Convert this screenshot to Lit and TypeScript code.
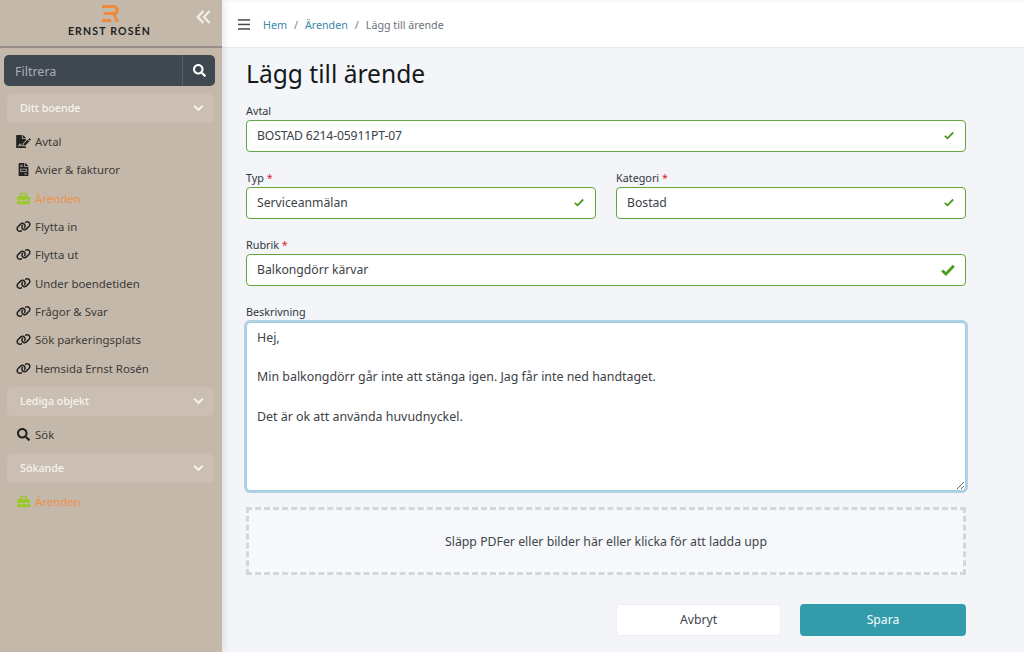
import { LitElement, html, css, svg } from "lit";
import { customElement } from "lit/decorators.js";

const ICONS: Record<string, [string, string]> = {
  search: ["0 0 512 512", "M505 442.7L405.3 343c-4.5-4.5-10.6-7-17-7H372c27.6-35.3 44-79.7 44-128C416 93.1 322.9 0 208 0S0 93.1 0 208s93.1 208 208 208c48.3 0 92.7-16.4 128-44v16.3c0 6.4 2.5 12.5 7 17l99.7 99.7c9.4 9.4 24.6 9.4 33.9 0l28.3-28.3c9.4-9.4 9.4-24.6.1-34zM208 336c-70.7 0-128-57.2-128-128 0-70.7 57.2-128 128-128 70.7 0 128 57.2 128 128 0 70.7-57.2 128-128 128z"],
  link: ["0 0 640 512", "M579.8 267.7c56.5-56.5 56.5-148 0-204.5c-50-50-128.8-56.5-186.3-15.4l-1.6 1.1c-14.4 10.3-17.7 30.3-7.4 44.6s30.3 17.7 44.6 7.4l1.6-1.1c32.1-22.9 76-19.3 103.8 8.6c31.5 31.5 31.5 82.5 0 114L422.3 334.8c-31.5 31.5-82.5 31.5-114 0c-27.9-27.9-31.5-71.8-8.6-103.8l1.1-1.6c10.3-14.4 6.9-34.4-7.4-44.6s-34.4-6.9-44.6 7.4l-1.1 1.6C206.5 251.2 213 330 263 380c56.5 56.5 148 56.5 204.5 0L579.8 267.7zM60.2 244.3c-56.5 56.5-56.5 148 0 204.5c50 50 128.8 56.5 186.3 15.4l1.6-1.1c14.4-10.3 17.7-30.3 7.4-44.6s-30.3-17.7-44.6-7.4l-1.6 1.1c-32.1 22.9-76 19.3-103.8-8.6C74 372 74 321 105.5 289.5L217.7 177.2c31.5-31.5 82.5-31.5 114 0c27.9 27.9 31.5 71.8 8.6 103.9l-1.1 1.6c-10.3 14.4-6.9 34.4 7.4 44.6s34.4 6.9 44.6-7.4l1.1-1.6C433.5 260.8 427 182 377 132c-56.5-56.5-148-56.5-204.5 0L60.2 244.3z"],
  toolbox: ["0 0 512 512", "M502.63 214.63l-45.25-45.25c-6-6-14.14-9.37-22.63-9.37H384V80c0-26.51-21.49-48-48-48H176c-26.51 0-48 21.49-48 48v80H77.25c-8.49 0-16.62 3.37-22.63 9.37L9.37 214.63c-6 6-9.37 14.14-9.37 22.63V320h128v-16c0-8.84 7.16-16 16-16h32c8.84 0 16 7.16 16 16v16h128v-16c0-8.84 7.16-16 16-16h32c8.84 0 16 7.16 16 16v16h128v-82.75c0-8.48-3.37-16.62-9.37-22.62zM320 160H192V80h128v80zm64 208c0 8.84-7.16 16-16 16h-32c-8.84 0-16-7.16-16-16v-16H192v16c0 8.84-7.16 16-16 16h-32c-8.84 0-16-7.16-16-16v-16H0v96c0 17.67 14.33 32 32 32h448c17.67 0 32-14.33 32-32v-96H384v16z"],
  invoice: ["0 0 384 512", "M288 256H96v64h192v-64zm89-151L279.1 7c-4.5-4.5-10.6-7-17-7H256v128h128v-6.1c0-6.3-2.5-12.4-7-16.9zm-153 31V0H24C10.7 0 0 10.7 0 24v464c0 13.3 10.7 24 24 24h336c13.3 0 24-10.7 24-24V160H248c-13.2 0-24-10.8-24-24zM64 72c0-4.42 3.58-8 8-8h80c4.42 0 8 3.58 8 8v16c0 4.42-3.58 8-8 8H72c-4.42 0-8-3.58-8-8V72zm0 64c0-4.42 3.58-8 8-8h80c4.42 0 8 3.58 8 8v16c0 4.42-3.58 8-8 8H72c-4.42 0-8-3.58-8-8v-16zm256 304c0 4.42-3.58 8-8 8h-80c-4.42 0-8-3.58-8-8v-16c0-4.42 3.58-8 8-8h80c4.42 0 8 3.58 8 8v16zm0-200v96c0 8.84-7.16 16-16 16H80c-8.84 0-16-7.16-16-16v-96c0-8.84 7.16-16 16-16h224c8.84 0 16 7.16 16 16z"],
  sign: ["0 0 576 512", "M218.17 424.14c-2.95-5.92-8.09-6.52-10.17-6.52s-7.22.59-10.02 6.19l-7.67 15.34c-6.37 12.78-25.03 11.37-29.48-2.09L144 386.59l-10.61 31.88c-5.89 17.66-22.38 29.53-41 29.53H80c-8.84 0-16-7.16-16-16s7.16-16 16-16h12.39c4.83 0 9.11-3.08 10.64-7.66l18.19-54.64c3.3-9.81 12.44-16.41 22.78-16.41s19.48 6.59 22.77 16.41l13.88 41.64c19.75-16.19 54.06-9.7 66 14.16 1.89 3.78 5.49 5.95 9.36 6.26v-82.12l128-127.09V160H248c-13.2 0-24-10.8-24-24V0H24C10.7 0 0 10.7 0 24v464c0 13.3 10.7 24 24 24h336c13.3 0 24-10.7 24-24v-40l-128-.11c-16.12-.31-30.58-9.28-37.83-23.75zM384 121.9c0-6.3-2.5-12.4-7-16.9L279.1 7c-4.5-4.5-10.6-7-17-7H256v128h128v-6.1zm-96 225.06V416h68.99l161.68-162.78-67.88-67.88L288 346.96zm280.54-179.63l-31.87-31.87c-9.94-9.94-26.07-9.94-36.01 0l-27.25 27.25 67.88 67.88 27.25-27.25c9.95-9.94 9.95-26.07 0-36.01z"],
};

const icon = (name: string) => {
  const [vb, d] = ICONS[name];
  return html`<svg viewBox=${vb} fill="currentColor">${svg`<path d=${d}></path>`}</svg>`;
};

const chevron = html`<svg class="chev" viewBox="0 0 12 8" fill="none" stroke="currentColor" stroke-width="2.2"><path d="M1.2 1.4 6 6l4.8-4.6"></path></svg>`;
const check = (cls = "") => html`<svg class="check ${cls}" viewBox="0 0 12 10" fill="none" stroke="currentColor" stroke-width="2.2"><path d="M1 5.4 4.2 8.4 11 1.4"></path></svg>`;

type Item = { i: string; t: string; active?: boolean };
const boende: Item[] = [
  { i: "sign", t: "Avtal" },
  { i: "invoice", t: "Avier & fakturor" },
  { i: "toolbox", t: "Ärenden", active: true },
  { i: "link", t: "Flytta in" },
  { i: "link", t: "Flytta ut" },
  { i: "link", t: "Under boendetiden" },
  { i: "link", t: "Frågor & Svar" },
  { i: "link", t: "Sök parkeringsplats" },
  { i: "link", t: "Hemsida Ernst Rosén" },
];

@customElement("app-root")
export class AppRoot extends LitElement {
  static styles = css`
    :host { display: block; height: 652px; overflow: hidden; font-family: "Noto Sans", "Open Sans", sans-serif; }
    * { box-sizing: border-box; }
    .app { display: flex; height: 652px; background: #f3f5f9; }
    .side { width: 222px; flex: none; background: #c4b8aa; display: flex; flex-direction: column; box-shadow: 2px 0 8px rgba(60, 60, 80, .12); z-index: 1; }
    .brand { height: 48px; border-bottom: 2px solid #968e87; display: flex; flex-direction: column; align-items: center; padding-top: 5px; position: relative; }
    .logo { width: 17px; height: 17px; display: block; margin-right: 1px; }
    .brandname { font-family: Lato, sans-serif; font-size: 10.5px; font-weight: 700; letter-spacing: 1.18px; color: #23211f; line-height: 12px; margin-top: 3px; margin-right: 3px; white-space: nowrap; }
    .collapse { position: absolute; left: 196px; top: 10px; width: 15px; height: 14px; color: #f1ede8; }
    .filter { margin: 7px 7px 8px 4px; height: 31px; background: #3f4750; border-radius: 5px; display: flex; align-items: center; color: #aab0b6; font-size: 12.5px; }
    .filter span { flex: 1; padding: 1px 0 0 11px; }
    .filter div { width: 33px; height: 100%; border-left: 1px solid #566069; display: flex; align-items: center; justify-content: center; color: #fff; }
    .filter svg { width: 13px; height: 13px; }
    .group { margin: 0 8px 0 7px; height: 29px; background: #cabfb2; border-radius: 5px; display: flex; align-items: center; justify-content: space-between; padding: 0 13px .4px; color: #f7f4f0; font-size: 10.7px; font-weight: 500; }
    .chev { width: 11px; height: 8px; color: #f7f4f0; margin-right: -3px; }
    .items { display: flex; flex-direction: column; padding: 4.5px 0 5px; }
    .item { height: 28.3px; display: flex; align-items: center; padding-left: 16px; color: #3c3a38; font-size: 11.4px; white-space: nowrap; }
    .item svg { width: 15px; height: 13px; margin-right: 4px; flex: none; color: #222; }
    .item.active { color: #ee9147; }
    .item.active svg { color: #9bc82a; }
    .main { flex: 1; display: flex; flex-direction: column; min-width: 0; padding-top: 2px; background: linear-gradient(#f8f8f8 2px, transparent 2px); }
    .top { height: 46px; flex: none; background: #fff; border-bottom: 1px solid #e9ebf0; display: flex; align-items: center; padding-left: 16px; font-size: 10.7px; color: #6b7278; }
    .burger { width: 12px; height: 11px; margin-right: 13px; color: #454b52; }
    .top a { color: #3b87ad; }
    .top i { font-style: normal; margin: 0 7px; color: #7b8186; }
    .content { padding: 0 58px 0 24px; }
    h1 { margin: 0; font-size: 24.6px; font-weight: 400; color: #16181a; line-height: 36px; padding-top: 8px; }
    .row { display: flex; gap: 20px; }
    .field { flex: 1; min-width: 0; display: flex; flex-direction: column; margin-bottom: 19.5px; }
    .first { margin-top: 12px; }
    label { font-size: 10.8px; line-height: 13px; height: 14px; color: #31363b; }
    label b { color: #d8232a; font-weight: 400; }
    .input { height: 31.5px; background: #fff; border: 1px solid #63a53a; border-radius: 4px; display: flex; align-items: center; justify-content: space-between; padding: 0 11px 0 10px; font-size: 12.2px; color: #3c4247; margin-top: 2px; }
    .tight { letter-spacing: -.15px; }
    .check { width: 10px; height: 9px; color: #4b9a1c; flex: none; }
    .check.big { width: 14px; height: 12px; margin-right: -1px; stroke-width: 2.4; }
    textarea { display: block; width: 100%; height: 169.5px; margin-top: 2.5px; resize: vertical; outline: 0; border: 1px solid #a3cbe2; border-radius: 4px; box-shadow: 0 0 0 2px #b1d2e4; background: #fff; font-family: inherit; font-size: 12.4px; line-height: 19.8px; color: #3c4247; padding: 5px 10px; overflow: hidden; }
    .drop { height: 68px; margin-top: -3.5px; border: 3px dashed #d3d6dc; background: #f7f8fb; display: flex; align-items: center; justify-content: center; font-size: 12.3px; color: #3f454a; }
    .actions { display: flex; justify-content: flex-end; gap: 19px; margin-top: 28.5px; }
    .btn { height: 32px; border-radius: 4px; display: flex; align-items: center; justify-content: center; font-size: 12.2px; }
    .cancel { width: 165px; background: #fff; border: 1px solid #eceef2; color: #3f454a; }
    .save { width: 166px; background: #339cab; color: #f4fbfc; }
  `;

  private items(list: Item[]) {
    return html`<div class="items">${list.map((x) => html`<div class="item ${x.active ? "active" : ""}">${icon(x.i)}<span>${x.t}</span></div>`)}</div>`;
  }

  render() {
    return html`<div class="app">
      <aside class="side">
        <div class="brand">
          <svg class="logo" viewBox="0 0 17 17" fill="#ef8a3c">
            <rect x="0" y="0" width="11" height="3"></rect>
            <rect x="1.5" y="7" width="8.5" height="3"></rect>
            <rect x="0" y="14" width="9" height="3"></rect>
            <path d="M9 0h2.6a5.3 5.3 0 0 1 2.4 10l3 7h-3.3l-2.8-6.9H9V7h2.4a2 2 0 0 0 0-4H9z"></path>
          </svg>
          <div class="brandname">ERNST ROSÉN</div>
          <svg class="collapse" viewBox="0 0 15 14" fill="none" stroke="currentColor" stroke-width="2.4"><path d="M7.4 1 1.8 7l5.6 6M13.6 1 8 7l5.6 6"></path></svg>
        </div>
        <div class="filter"><span>Filtrera</span><div>${icon("search")}</div></div>
        <div class="group"><span>Ditt boende</span>${chevron}</div>
        ${this.items(boende)}
        <div class="group"><span>Lediga objekt</span>${chevron}</div>
        ${this.items([{ i: "search", t: "Sök" }])}
        <div class="group"><span>Sökande</span>${chevron}</div>
        ${this.items([{ i: "toolbox", t: "Ärenden", active: true }])}
      </aside>
      <main class="main">
        <header class="top">
          <svg class="burger" viewBox="0 0 12 11" fill="currentColor"><rect width="12" height="1.5" y="0.2"></rect><rect width="12" height="1.5" y="4.7"></rect><rect width="12" height="1.5" y="9.2"></rect></svg>
          <a>Hem</a><i>/</i><a>Ärenden</a><i>/</i><span>Lägg till ärende</span>
        </header>
        <div class="content">
          <h1>Lägg till ärende</h1>
          <div class="field first"><label>Avtal</label><div class="input"><span class="tight">BOSTAD 6214-05911PT-07</span>${check()}</div></div>
          <div class="row">
            <div class="field"><label>Typ <b>*</b></label><div class="input"><span>Serviceanmälan</span>${check()}</div></div>
            <div class="field"><label>Kategori <b>*</b></label><div class="input"><span>Bostad</span>${check()}</div></div>
          </div>
          <div class="field"><label>Rubrik <b>*</b></label><div class="input"><span>Balkongdörr kärvar</span>${check("big")}</div></div>
          <div class="field"><label>Beskrivning</label><textarea .value=${"Hej,\n\nMin balkongdörr går inte att stänga igen. Jag får inte ned handtaget.\n\nDet är ok att använda huvudnyckel."}></textarea></div>
          <div class="drop">Släpp PDFer eller bilder här eller klicka för att ladda upp</div>
          <div class="actions"><div class="btn cancel">Avbryt</div><div class="btn save">Spara</div></div>
        </div>
      </main>
    </div>`;
  }
}
